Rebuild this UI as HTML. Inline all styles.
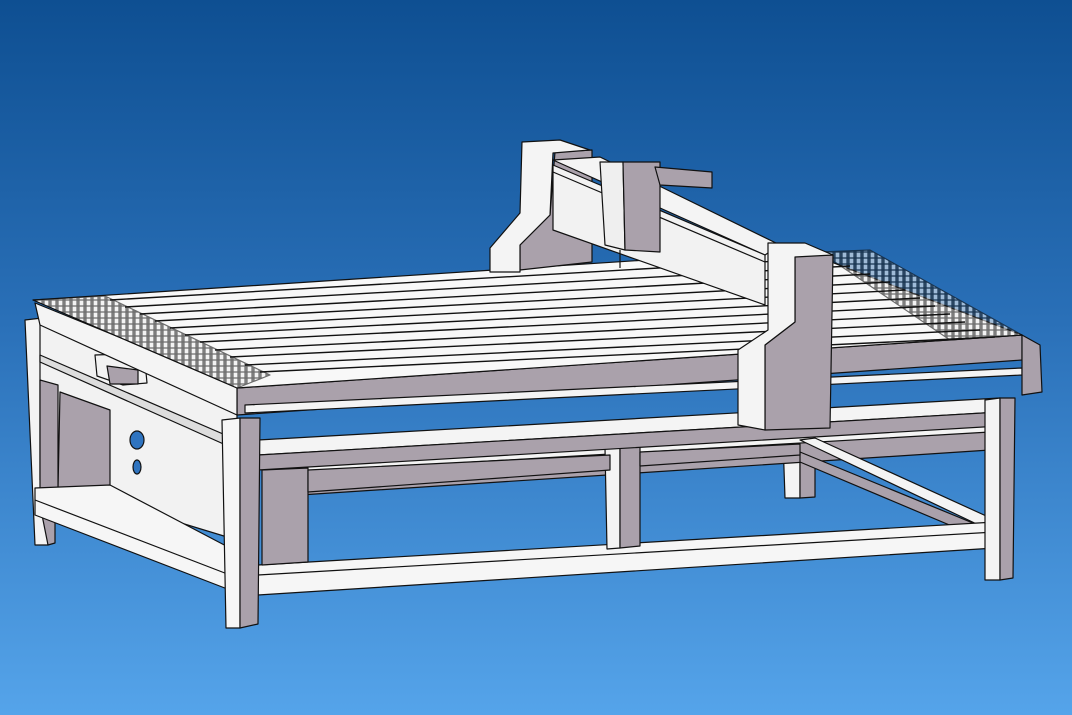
<!DOCTYPE html>
<html><head><meta charset="utf-8"><style>
html,body{margin:0;padding:0;width:1072px;height:715px;overflow:hidden}
body{background:linear-gradient(180deg,#0e4f92 0%,#2a70b8 45%,#55a4ea 100%)}
svg{position:absolute;left:0;top:0}
</style></head><body>
<svg width="1072" height="715" viewBox="0 0 1072 715" stroke="#111" stroke-width="1.2" stroke-linejoin="round">
<defs>
<pattern id="grate" width="7" height="6" patternUnits="userSpaceOnUse"><rect width="7" height="6" fill="#f0f0f0"/><rect x="0" y="0" width="2" height="6" fill="#555"/></pattern>
</defs>
<!-- back right leg -->
<polygon points="783,440 800,438 800,498 785,498" fill="#f4f4f4"/>
<polygon points="800,438 815,440 815,497 800,498" fill="#aaa1ab"/>
<!-- back lower rail -->
<polygon points="300,470 990,430 990,450 300,495" fill="#aaa1ab"/>
<polygon points="300,465 990,425 990,432 300,472" fill="#f4f4f4"/>
<!-- right side lower rail -->
<polygon points="800,440 815,438 995,520 985,528" fill="#f4f4f4"/>
<polygon points="800,452 985,528 985,540 800,462" fill="#aaa1ab"/>
<!-- back left leg -->
<polygon points="25,320 42,318 48,545 35,545" fill="#f4f4f4"/>
<polygon points="42,515 55,515 55,543 48,545" fill="#aaa1ab"/>
<!-- left end panel -->
<polygon points="40,310 237,390 237,540 40,480" fill="#f2f2f2"/>
<polygon points="40,380 58,385 58,492 40,490" fill="#aaa1ab"/>
<polygon points="60,392 110,410 110,485 58,490" fill="#aaa1ab"/>
<polygon points="40,355 237,440 237,450 40,362" fill="#ddd"/>
<ellipse cx="137" cy="440" rx="7" ry="9" fill="#2f74c0"/>
<ellipse cx="137" cy="467" rx="4" ry="7" fill="#2f74c0"/>
<polygon points="95,355 123,354 145,362 147,383 123,385 97,376" fill="#f2f2f2"/>
<polygon points="107,366 138,370 138,384 110,384" fill="#aaa1ab"/>
<!-- left lower rail -->
<polygon points="35,488 110,485 230,548 230,590 35,515" fill="#f6f6f6"/>
<line x1="35" y1="500" x2="230" y2="575"/>
<!-- front bottom rail -->
<polygon points="258,565 995,522 995,548 258,595" fill="#f6f6f6"/>
<line x1="258" y1="575" x2="995" y2="532"/>
<!-- middle post -->
<polygon points="605,448 620,447 620,548 607,549" fill="#f4f4f4"/>
<polygon points="620,447 640,446 640,546 620,548" fill="#aaa1ab"/>
<!-- inner left leg face -->
<polygon points="262,470 308,468 308,562 262,565" fill="#aaa1ab"/>
<!-- mid rail (front) -->
<polygon points="258,440 1000,398 1000,412 258,455" fill="#f4f4f4"/>
<polygon points="258,455 1000,412 1000,426 258,470" fill="#aaa1ab"/>
<polygon points="308,470 610,455 610,470 308,492" fill="#aaa1ab"/>
<polygon points="640,452 800,444 800,455 640,466" fill="#aaa1ab"/>
<!-- right front leg -->
<polygon points="985,400 1000,398 1000,580 985,580" fill="#f4f4f4"/>
<polygon points="1000,398 1015,398 1013,578 1000,580" fill="#aaa1ab"/>
<!-- front-left leg -->
<polygon points="222,420 240,418 240,628 226,628" fill="#f6f6f6"/>
<polygon points="240,418 260,418 258,624 240,628" fill="#aaa1ab"/>
<!-- front apron -->
<polygon points="237,388 1022,335 1022,360 237,415" fill="#aaa1ab"/>
<polygon points="245,405 1022,368 1022,375 245,413" fill="#f4f4f4"/>
<polygon points="1022,335 1040,345 1042,392 1022,395" fill="#aaa1ab"/>
<!-- left end apron top -->
<polygon points="35,303 237,385 237,415 40,325" fill="#f4f4f4"/>
<!-- table top -->
<polygon points="33,300 800,250 1022,335 237,388" fill="#f8f8f8"/>
<polygon points="33,300 105,296 270,375 237,388" fill="url(#grate)" opacity="0.6"/>
<polygon points="820,252 870,250 1022,335 950,340" fill="url(#grate)" opacity="0.6"/>
<g stroke-width="1.4">
<line x1="110" y1="300" x2="830" y2="258"/>
<line x1="125" y1="307" x2="850" y2="266"/>
<line x1="140" y1="314" x2="870" y2="274"/>
<line x1="155" y1="321" x2="890" y2="282"/>
<line x1="170" y1="328" x2="905" y2="290"/>
<line x1="185" y1="335" x2="920" y2="298"/>
<line x1="200" y1="342" x2="935" y2="306"/>
<line x1="215" y1="350" x2="950" y2="314"/>
<line x1="230" y1="357" x2="965" y2="322"/>
<line x1="245" y1="365" x2="980" y2="330"/>
<line x1="260" y1="372" x2="995" y2="337"/>
</g>
<!-- gantry left upright -->
<polygon points="555,152 592,150 592,262 520,270 520,245 550,215" fill="#aaa1ab"/>
<polygon points="522,142 560,140 590,150 553,153 550,215 520,245 520,272 490,272 490,248 520,213" fill="#f4f4f4"/>
<!-- beam -->
<polygon points="553,160 600,157 780,245 765,255" fill="#f4f4f4"/>
<polygon points="553,165 765,255 765,305 553,230" fill="#f2f2f2"/>
<line x1="553" y1="172" x2="765" y2="262"/>
<!-- carriage -->
<polygon points="600,162 623,162 625,250 605,245" fill="#efefef"/>
<polygon points="623,162 660,162 660,252 625,250" fill="#aaa1ab"/>
<polygon points="655,167 712,172 712,188 660,185" fill="#aaa1ab"/>
<line x1="620" y1="250" x2="620" y2="268"/>
<!-- right upright -->
<polygon points="795,255 833,255 830,428 765,430 765,345 795,322" fill="#aaa1ab"/>
<polygon points="768,243 805,243 833,255 795,257 795,322 765,345 765,430 738,425 738,350 768,330" fill="#f4f4f4"/>
</svg>
</body></html>
